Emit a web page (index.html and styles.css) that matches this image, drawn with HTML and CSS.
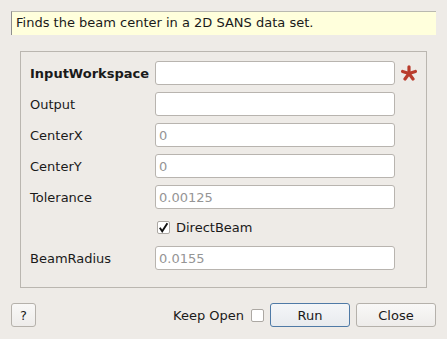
FILE: index.html
```html
<!DOCTYPE html>
<html lang="en">
<head>
    <meta charset="UTF-8">
    <title>FindCenterOfMassPosition</title>
    <link rel="stylesheet" href="styles.css">
</head>
<body>
    <div class="dialog">
        <div class="description">Finds the beam center in a 2D SANS data set.</div>

        <div class="group">
            <label class="prop-label mandatory" for="inputWs">InputWorkspace</label>
            <input class="prop-input" type="text" id="inputWs">
            <span class="req-mark">
                <svg width="16" height="16" viewBox="0 0 16 16">
                    <g stroke="#b93c2c" stroke-width="3.2" stroke-linecap="round">
                        <line x1="8" y1="8.5" x2="8" y2="1.8"/>
                        <line x1="8" y1="8.5" x2="14.4" y2="6.5"/>
                        <line x1="8" y1="8.5" x2="12" y2="14"/>
                        <line x1="8" y1="8.5" x2="4" y2="14"/>
                        <line x1="8" y1="8.5" x2="1.6" y2="6.5"/>
                    </g>
                </svg>
            </span>

            <label class="prop-label" for="output">Output</label>
            <input class="prop-input" type="text" id="output">
            <span></span>

            <label class="prop-label" for="centerX">CenterX</label>
            <input class="prop-input" type="text" id="centerX" placeholder="0">
            <span></span>

            <label class="prop-label" for="centerY">CenterY</label>
            <input class="prop-input" type="text" id="centerY" placeholder="0">
            <span></span>

            <label class="prop-label" for="tolerance">Tolerance</label>
            <input class="prop-input" type="text" id="tolerance" placeholder="0.00125">
            <span></span>

            <span></span>
            <label class="check-row">
                <span class="checkbox checked">
                    <svg width="11" height="11" viewBox="0 0 11 11">
                        <path d="M1.8 5.8 L4.2 9.2 L9.4 1.2" fill="none" stroke="#111" stroke-width="1.9"/>
                    </svg>
                </span>
                DirectBeam
            </label>
            <span></span>

            <label class="prop-label" for="beamRadius">BeamRadius</label>
            <input class="prop-input" type="text" id="beamRadius" placeholder="0.0155">
            <span></span>
        </div>

        <div class="button-bar">
            <button class="btn help-btn">?</button>
            <div class="spacer"></div>
            <label class="keep-open">Keep Open <span class="checkbox"></span></label>
            <button class="btn default-btn">Run</button>
            <button class="btn">Close</button>
        </div>
    </div>
</body>
</html>
```

FILE: styles.css
```css
body {
    margin: 0;
    background: #eeebe7;
    font-family: 'DejaVu Sans', sans-serif;
    font-size: 13px;
    color: #1a1a1a;
}

.dialog {
    width: 447px;
    height: 339px;
    box-sizing: border-box;
    padding: 11px 11px 0 11px;
}

.description {
    height: 24px;
    box-sizing: border-box;
    background: #ffffdc;
    border-left: 1px solid #8f8f8f;
    border-top: 1px solid #b9b9b0;
    padding-left: 4px;
    line-height: 21px;
    margin-bottom: 16px;
}

.group {
    margin: 0 9px 0 9px;
    border: 1px solid #bab6b0;
    padding: 9px 0 17px 9px;
    display: grid;
    grid-template-columns: 125px 240px 22px;
    grid-template-rows: repeat(5, 24px) 23px 24px;
    row-gap: 7px;
    align-items: center;
}

.prop-label {
    white-space: nowrap;
}

.mandatory {
    font-weight: bold;
}

.prop-input {
    height: 24px;
    width: 240px;
    box-sizing: border-box;
    border: 1px solid #b8b4af;
    border-radius: 3px;
    background: #fff;
    padding: 0 3px;
    font-family: 'DejaVu Sans', sans-serif;
    font-size: 13px;
    outline: none;
}

.prop-input::placeholder {
    color: #959595;
}

.req-mark {
    padding-left: 6px;
    display: flex;
    align-items: center;
}

.check-row {
    display: flex;
    align-items: center;
    gap: 6px;
    padding-left: 2px;
}

.checkbox {
    width: 13px;
    height: 13px;
    box-sizing: border-box;
    border: 1px solid #aca8a3;
    border-radius: 2px;
    background: #fff;
    display: inline-flex;
    align-items: center;
    justify-content: center;
}

.button-bar {
    display: flex;
    align-items: center;
    gap: 6px;
    margin-top: 15px;
}

.spacer {
    flex: 1;
}

.keep-open {
    display: flex;
    align-items: center;
    gap: 7px;
}

.btn {
    height: 24px;
    width: 80px;
    border: 1px solid #b5b1ab;
    border-radius: 3px;
    background: linear-gradient(#f9f8f7, #eeecea);
    font-family: 'DejaVu Sans', sans-serif;
    font-size: 13px;
    color: #1a1a1a;
    padding: 0;
}

.help-btn {
    width: 25px;
}

.default-btn {
    border-color: #4f7aa6;
    background: linear-gradient(#f4f6f8, #e8ebee);
}
```
